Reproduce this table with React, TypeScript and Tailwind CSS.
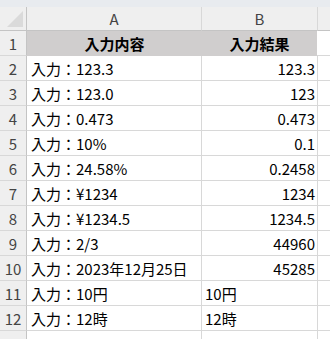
const rows: [string, string, "r" | "l"][] = [
  ["入力：123.3", "123.3", "r"],
  ["入力：123.0", "123", "r"],
  ["入力：0.473", "0.473", "r"],
  ["入力：10%", "0.1", "r"],
  ["入力：24.58%", "0.2458", "r"],
  ["入力：¥1234", "1234", "r"],
  ["入力：¥1234.5", "1234.5", "r"],
  ["入力：2/3", "44960", "r"],
  ["入力：2023年12月25日", "45285", "r"],
  ["入力：10円", "10円", "l"],
  ["入力：12時", "12時", "l"],
];

const font = { fontFamily: '"Noto Sans CJK JP", sans-serif' };

function RowNum({ n }: { n: number }) {
  return (
    <div className="w-[27px] shrink-0 h-full flex items-center justify-center bg-[#efefef] border-r border-b border-r-[#c4c4c4] border-b-[#d8d8d8] text-[#444] text-[15px]">
      {n}
    </div>
  );
}

export default function App() {
  return (
    <div
      className="w-[330px] h-[339px] overflow-hidden bg-white text-black text-[15px] leading-none"
      style={font}
    >
      <div className="h-[7px] bg-[#e8ebef]" />

      {/* column headers */}
      <div className="flex h-[24px]">
        <div className="w-[27px] shrink-0 relative bg-[#efefef] border-r border-b border-[#c4c4c4]">
          <div className="absolute right-[3px] bottom-[3px] w-0 h-0 border-l-[16px] border-l-transparent border-b-[16px] border-b-[#dadada]" />
        </div>
        <div className="w-[175px] shrink-0 flex items-center justify-center bg-[#efefef] border-r border-b border-r-[#d8d8d8] border-b-[#c4c4c4] text-[#444]">
          A
        </div>
        <div className="w-[116px] shrink-0 flex items-center justify-center bg-[#efefef] border-r border-b border-r-[#d8d8d8] border-b-[#c4c4c4] text-[#444]">
          B
        </div>
        <div className="flex-1 bg-[#efefef] border-b border-[#c4c4c4]" />
      </div>

      {/* row 1 */}
      <div className="flex h-[25px]">
        <RowNum n={1} />
        <div className="w-[290px] shrink-0 flex bg-[#d0cece] font-bold">
          <div className="w-[175px] flex items-center justify-center">入力内容</div>
          <div className="w-[115px] flex items-center justify-center">入力結果</div>
        </div>
        <div className="flex-1 border-b border-[#d8d8d8]" />
      </div>

      {rows.map(([a, b, align], i) => (
        <div key={i} className="flex h-[25px]">
          <RowNum n={i + 2} />
          <div className="w-[175px] shrink-0 flex items-center pl-[4px] border-r border-b border-[#d8d8d8] whitespace-nowrap">
            {a}
          </div>
          <div
            className={
              align === "r"
                ? "w-[116px] shrink-0 flex items-center justify-end pr-[2px] border-r border-b border-[#d8d8d8]"
                : "w-[116px] shrink-0 flex items-center pl-[3px] border-r border-b border-[#d8d8d8]"
            }
          >
            {b}
          </div>
          <div className="flex-1 border-b border-[#d8d8d8]" />
        </div>
      ))}

      <div className="flex h-[25px]">
        <RowNum n={13} />
        <div className="w-[175px] shrink-0 border-r border-[#d8d8d8]" />
        <div className="w-[116px] shrink-0 border-r border-[#d8d8d8]" />
      </div>
    </div>
  );
}
